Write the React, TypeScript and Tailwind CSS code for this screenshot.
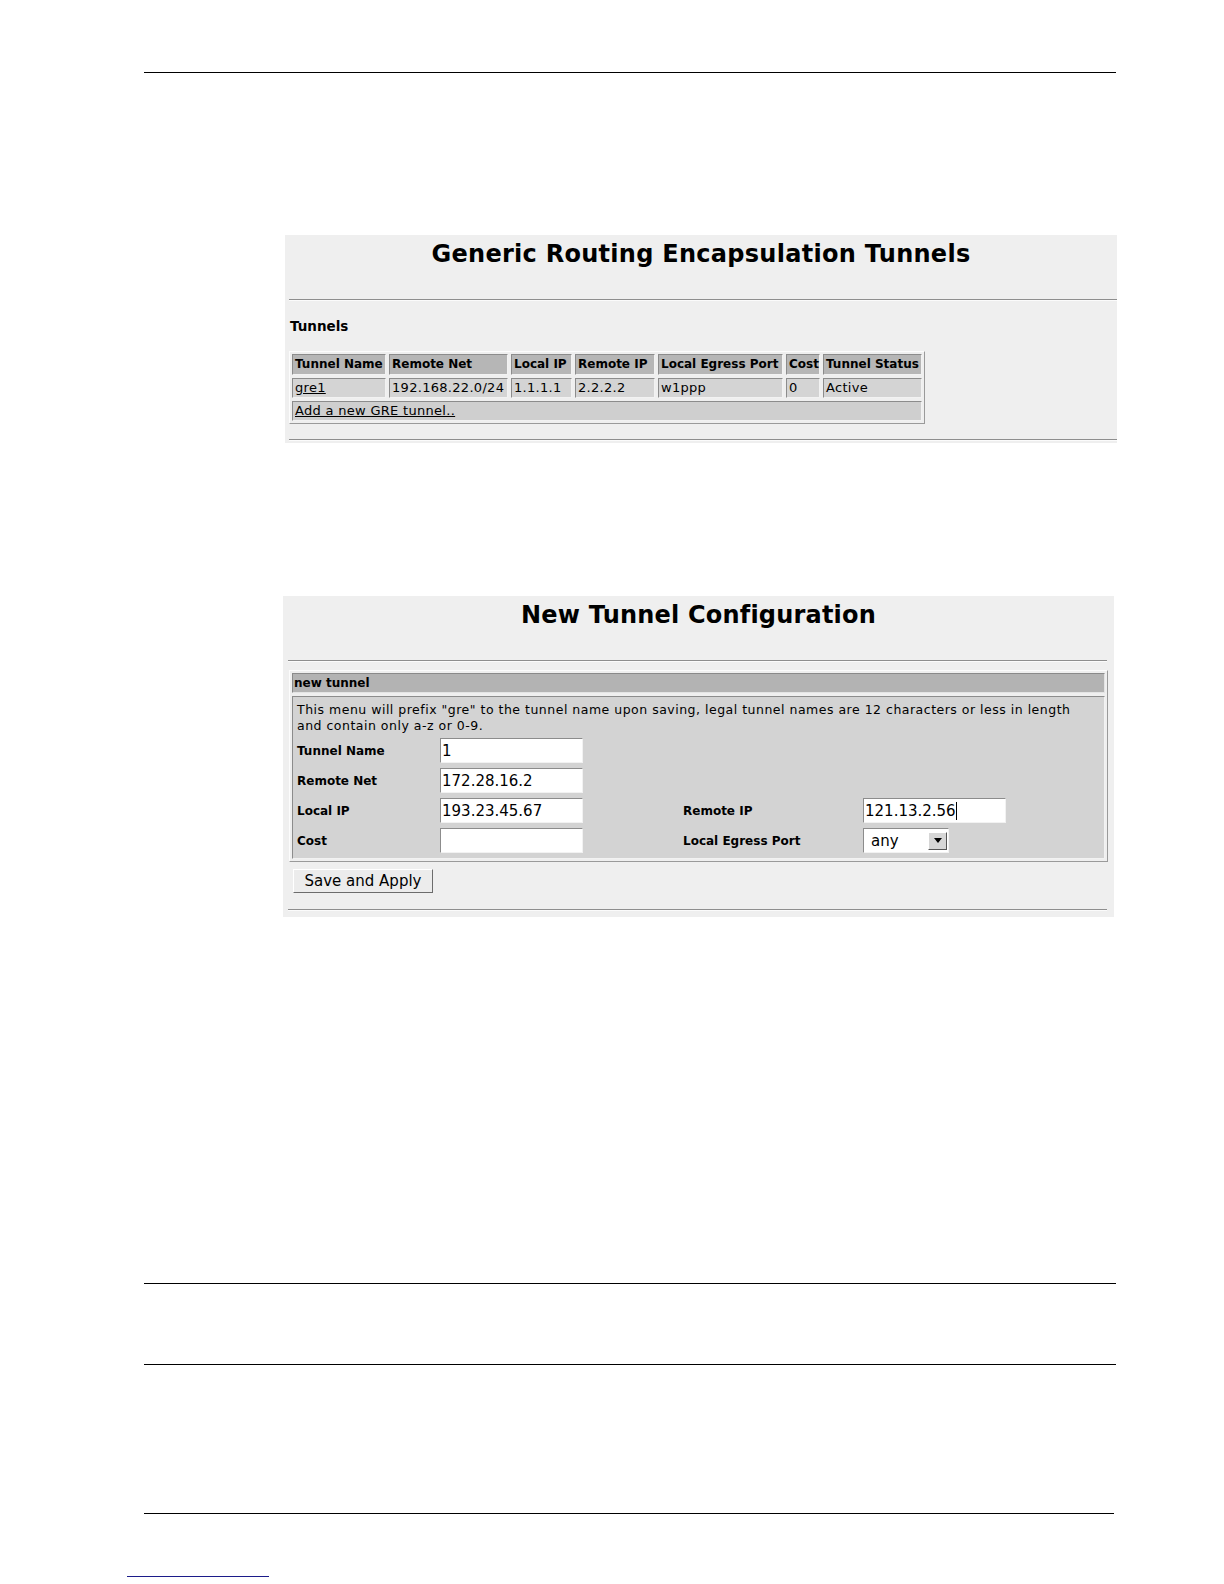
import React from 'react';

// inset / outset bevels used all over the old router web UI
const inset = 'border border-t-[#8c8c8c] border-l-[#8c8c8c] border-r-[#f2f2f2] border-b-[#f2f2f2]';
const outset = 'border border-t-[#fcfcfc] border-l-[#fcfcfc] border-r-[#9a9a9a] border-b-[#9a9a9a]';

const Rule: React.FC<{ className?: string }> = ({ className = '' }) => (
  <div className={`h-[2px] border-t border-b border-t-[#8e8e8e] border-b-[#fbfbfb] ${className}`} />
);

const headers = ['Tunnel Name', 'Remote Net', 'Local IP', 'Remote IP', 'Local Egress Port', 'Cost', 'Tunnel Status'];
const row = ['gre1', '192.168.22.0/24', '1.1.1.1', '2.2.2.2', 'w1ppp', '0', 'Active'];

const TunnelsPanel: React.FC = () => (
  <div className="ml-[285px] mt-[162px] w-[832px] h-[208px] bg-[#efefef]">
    <h1 className="pt-[5px] text-center text-[24px] leading-[28px] font-bold tracking-[0.28px]">Generic Routing Encapsulation Tunnels</h1>
    <Rule className="mt-[31px] ml-[4px]" />
    <h2 className="mt-[16px] ml-[5px] text-[13.5px] leading-[18px] font-bold">Tunnels</h2>
    <div className={`mt-[16px] ml-[4px] w-fit p-[2px] ${outset}`}>
      <div className="grid grid-cols-[94px_119px_61px_80px_125px_34px_99px] gap-[3px]">
        {headers.map((h) => (
          <div key={h} className={`h-[21px] bg-[#b6b6b6] ${inset} pl-[2px] text-[12px] leading-[19px] font-bold whitespace-nowrap`}>
            {h}
          </div>
        ))}
        {row.map((c, i) => (
          <div key={i} className={`h-[20px] bg-[#d4d4d4] ${inset} pl-[2px] text-[13px] leading-[18px] tracking-[0.3px] whitespace-nowrap`}>
            {i === 0 ? <span className="underline">{c}</span> : c}
          </div>
        ))}
        <div className={`col-span-7 h-[20px] bg-[#cfcfcf] ${inset} pl-[2px] text-[13px] leading-[18px] tracking-[0.3px]`}>
          <span className="underline">Add a new GRE tunnel..</span>
        </div>
      </div>
    </div>
    <Rule className="mt-[15px] ml-[4px]" />
  </div>
);

const TextBox: React.FC<{ value?: string; caret?: boolean }> = ({ value = '', caret }) => (
  <div className={`w-[143px] h-[25px] bg-white ${inset} border-t-[#7a7a7a] border-l-[#7a7a7a] pl-[1px] flex items-center text-[15px] leading-[20px] whitespace-nowrap`}>
    {value}
    {caret && <span className="inline-block w-px h-[18px] bg-black" />}
  </div>
);

const Label: React.FC<{ children: React.ReactNode }> = ({ children }) => (
  <div className="h-[25px] flex items-center text-[12px] font-bold whitespace-nowrap">{children}</div>
);

const SelectBox: React.FC = () => (
  <div className={`w-[86px] h-[25px] bg-white ${inset} border-t-[#7a7a7a] border-l-[#7a7a7a] flex items-center justify-between pl-[7px] pr-[1px]`}>
    <span className="text-[15px] leading-[20px]">any</span>
    <div className="w-[19px] h-[18px] bg-[#d6d6d6] border border-t-white border-l-white border-r-[#555] border-b-[#555] flex items-center justify-center">
      <svg width="8" height="5" viewBox="0 0 8 5"><path d="M0 0h8L4 5z" fill="#000" /></svg>
    </div>
  </div>
);

const NewTunnelPanel: React.FC = () => (
  <div className="ml-[283px] mt-[153px] w-[831px] h-[321px] bg-[#efefef]">
    <h1 className="pt-[5px] text-center text-[24px] leading-[28px] font-bold tracking-[0.2px]">New Tunnel Configuration</h1>
    <Rule className="mt-[31px] ml-[5px] mr-[7px]" />
    <div className={`mt-[8px] mx-[6px] p-[2px] ${outset}`}>
      <div className="h-[20px] bg-[#b3b3b3] border border-t-[#8a8a8a] border-l-[#8a8a8a] border-r-[#e4e4e4] border-b-[#e4e4e4] pl-[1px] text-[12px] leading-[18px] font-bold">
        new tunnel
      </div>
      <div className={`mt-[3px] bg-[#d3d3d3] ${inset} pt-[5px] pb-[5px] pl-[4px]`}>
        <p className="text-[12.5px] leading-[16px] tracking-[0.5px] whitespace-nowrap">
          This menu will prefix "gre" to the tunnel name upon saving, legal tunnel names are 12 characters or less in length
          <br />
          and contain only a-z or 0-9.
        </p>
        <div className="mt-[4px] grid grid-cols-[143px_243px_180px_auto] gap-y-[5px]">
          <Label>Tunnel Name</Label>
          <TextBox value="1" />
          <div />
          <div />
          <Label>Remote Net</Label>
          <TextBox value="172.28.16.2" />
          <div />
          <div />
          <Label>Local IP</Label>
          <TextBox value="193.23.45.67" />
          <Label>Remote IP</Label>
          <TextBox value="121.13.2.56" caret />
          <Label>Cost</Label>
          <TextBox />
          <Label>Local Egress Port</Label>
          <SelectBox />
        </div>
      </div>
    </div>
    <button className="mt-[7px] ml-[10px] w-[140px] h-[24px] bg-[#ececec] border border-t-white border-l-white border-r-[#6c6c6c] border-b-[#6c6c6c] text-[15px] leading-[20px]">
      Save and Apply
    </button>
    <Rule className="mt-[16px] ml-[5px] mr-[7px]" />
  </div>
);

export default function App() {
  return (
    <div className="w-[1224px] h-[1584px] bg-white text-black overflow-hidden font-['DejaVu_Sans',sans-serif]">
      <div className="pt-[72px] pl-[144px]">
        <div className="w-[972px] h-px bg-black" />
      </div>
      <TunnelsPanel />
      <NewTunnelPanel />
      <div className="mt-[366px] ml-[144px] w-[972px] h-px bg-black" />
      <div className="mt-[80px] ml-[144px] w-[972px] h-px bg-black" />
      <div className="mt-[148px] ml-[144px] w-[970px] h-px bg-black" />
      <div className="mt-[62px] ml-[127px] w-[142px] h-px bg-[#1c1c8a]" />
    </div>
  );
}
